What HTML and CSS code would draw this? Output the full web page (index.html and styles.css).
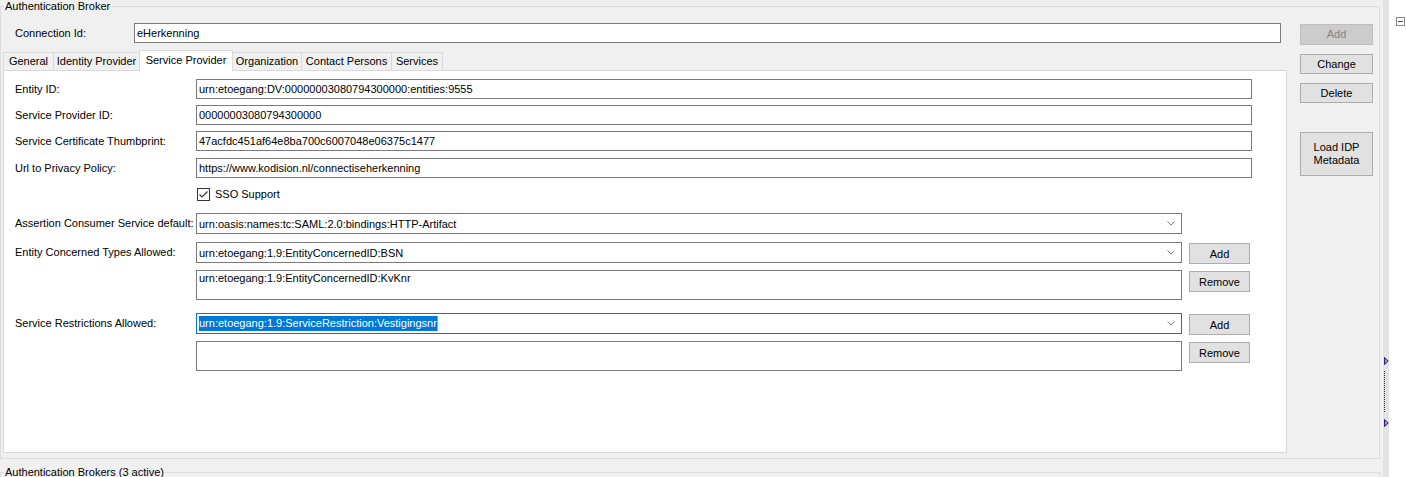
FILE: index.html
```html
<!DOCTYPE html>
<html>
<head>
<meta charset="utf-8">
<link rel="stylesheet" href="styles.css">
</head>
<body>
<div class="app">
  <div class="main">
    <fieldset class="group broker">
      <legend>Authentication Broker</legend>
      <div class="broker-body">
        <div class="editor">
          <div class="conn-row">
            <span class="conn-label">Connection Id:</span>
            <div class="textbox conn-box">eHerkenning</div>
          </div>
          <div class="tabs">
            <div class="tab">General</div>
            <div class="tab">Identity Provider</div>
            <div class="tab selected">Service Provider</div>
            <div class="tab">Organization</div>
            <div class="tab">Contact Persons</div>
            <div class="tab">Services</div>
          </div>
          <div class="tab-page">
            <div class="form">
              <div class="row">
                <span class="lbl">Entity ID:</span>
                <div class="textbox field">urn:etoegang:DV:00000003080794300000:entities:9555</div>
              </div>
              <div class="row mt6">
                <span class="lbl">Service Provider ID:</span>
                <div class="textbox field">00000003080794300000</div>
              </div>
              <div class="row mt6">
                <span class="lbl">Service Certificate Thumbprint:</span>
                <div class="textbox field">47acfdc451af64e8ba700c6007048e06375c1477</div>
              </div>
              <div class="row mt7">
                <span class="lbl">Url to Privacy Policy:</span>
                <div class="textbox field">https://www.kodision.nl/connectiseherkenning</div>
              </div>
              <div class="row check-row mt10">
                <span class="lbl"></span>
                <svg class="checkbox" width="13" height="13" viewBox="0 0 13 13">
                  <rect x="0.5" y="0.5" width="12" height="12" fill="#fff" stroke="#333"/>
                  <path d="M2.5 6.5 L5 9 L10.5 3.5" fill="none" stroke="#333" stroke-width="1.1"/>
                </svg>
                <span class="check-text">SSO Support</span>
              </div>
              <div class="row row-combo mt12">
                <span class="lbl lbl-combo">Assertion Consumer Service default:</span>
                <div class="combo">
                  <span>urn:oasis:names:tc:SAML:2.0:bindings:HTTP-Artifact</span>
                  <svg class="chev" width="8" height="5" viewBox="0 0 8 5"><path d="M0.5 0.5 L4 4 L7.5 0.5" fill="none" stroke="#808080"/></svg>
                </div>
              </div>
              <div class="row row-combo mt8">
                <span class="lbl lbl-combo">Entity Concerned Types Allowed:</span>
                <div class="combo">
                  <span>urn:etoegang:1.9:EntityConcernedID:BSN</span>
                  <svg class="chev" width="8" height="5" viewBox="0 0 8 5"><path d="M0.5 0.5 L4 4 L7.5 0.5" fill="none" stroke="#808080"/></svg>
                </div>
                <div class="btn">Add</div>
              </div>
              <div class="row row-list mt7">
                <span class="lbl"></span>
                <div class="listbox">urn:etoegang:1.9:EntityConcernedID:KvKnr</div>
                <div class="btn">Remove</div>
              </div>
              <div class="row row-combo mt13">
                <span class="lbl lbl-combo">Service Restrictions Allowed:</span>
                <div class="combo focus">
                  <span class="sel">urn:etoegang:1.9:ServiceRestriction:Vestigingsnr</span>
                  <svg class="chev" width="8" height="5" viewBox="0 0 8 5"><path d="M0.5 0.5 L4 4 L7.5 0.5" fill="none" stroke="#808080"/></svg>
                </div>
                <div class="btn">Add</div>
              </div>
              <div class="row row-list mt7">
                <span class="lbl"></span>
                <div class="listbox"></div>
                <div class="btn">Remove</div>
              </div>
            </div>
          </div>
        </div>
        <div class="actions">
          <div class="side-btn disabled">Add</div>
          <div class="side-btn change">Change</div>
          <div class="side-btn delete">Delete</div>
          <div class="side-btn load">Load IDP<br>Metadata</div>
        </div>
      </div>
    </fieldset>
    <fieldset class="group brokers">
      <legend>Authentication Brokers (3 active)</legend>
    </fieldset>
  </div>
  <div class="splitter">
    <svg class="tri" width="5" height="8" viewBox="0 0 5 8"><path d="M0.5 0.5 L4.2 4 L0.5 7.5 Z" fill="#f08c1e" stroke="#1a1aa8"/></svg>
    <div class="dots"></div>
    <svg class="tri tri2" width="5" height="8" viewBox="0 0 5 8"><path d="M0.5 0.5 L4.2 4 L0.5 7.5 Z" fill="#f08c1e" stroke="#1a1aa8"/></svg>
  </div>
  <div class="side">
    <svg class="collapse" width="9" height="9" viewBox="0 0 9 9">
      <rect x="0.5" y="0.5" width="8" height="8" fill="#fff" stroke="#8a8a8a"/>
      <path d="M2 4.5 H7" stroke="#2d4f8f"/>
    </svg>
  </div>
</div>
</body>
</html>
```

FILE: styles.css
```css
* { box-sizing: border-box; }
html, body { margin: 0; padding: 0; }
body {
  width: 1406px;
  height: 477px;
  overflow: hidden;
  background: #f0f0f0;
  font: 11px "Liberation Sans", Arial, sans-serif;
  color: #000;
}
.app { display: flex; height: 477px; }
.main { width: 1383px; flex: none; }

.group {
  margin: 0;
  padding: 0 0 5px 0;
  border: 1px solid #dcdcdc;
  width: 1380px;
  min-width: 0;
}
.group legend {
  margin-left: 3px;
  padding: 0 1px;
  line-height: 13px;
  height: 13px;
}
.brokers { margin-top: 7px; height: 40px; }

.broker-body { display: flex; height: 440px; }
.editor { width: 1287px; padding-left: 2px; flex: none; }

.conn-row { display: flex; margin-top: 10px; height: 20px; align-items: center; }
.conn-label { width: 131px; padding-left: 12px; }
.textbox {
  height: 20px;
  border: 1px solid #7a7a7a;
  background: #fff;
  padding: 0 2px;
  line-height: 18px;
  white-space: nowrap;
  overflow: hidden;
}
.conn-box { width: 1147px; }

.tabs {
  display: flex;
  align-items: flex-end;
  margin-top: 7px;
  height: 20px;
  position: relative;
  z-index: 1;
}
.tab {
  height: 18px;
  border: 1px solid #d9d9d9;
  border-bottom: none;
  margin-right: -1px;
  background: #f0f0f0;
  text-align: center;
  line-height: 16px;
  white-space: nowrap;
}
.tab:nth-child(1) { width: 51px; }
.tab:nth-child(2) { width: 87px; }
.tab:nth-child(3) { width: 94px; }
.tab:nth-child(4) { width: 70px; }
.tab:nth-child(5) { width: 91px; }
.tab:nth-child(6) { width: 52px; }
.tab.selected {
  height: 21px;
  margin-bottom: -1px;
  background: #fff;
  line-height: 18px;
  position: relative;
  z-index: 2;
}
.tab-page {
  width: 1284px;
  height: 383px;
  border: 1px solid #d9d9d9;
  background: #fff;
}

.form { display: flex; flex-direction: column; padding: 8px 0 0 11px; }
.row { display: flex; align-items: flex-start; }
.row-combo { height: 21px; }
.row-list { height: 30px; }
.mt6 { margin-top: 6px; }
.mt7 { margin-top: 7px; }
.mt8 { margin-top: 8px; }
.mt10 { margin-top: 10px; }
.mt12 { margin-top: 12px; }
.mt13 { margin-top: 13px; }
.lbl { width: 181px; flex: none; line-height: 20px; white-space: nowrap; }
.lbl-combo { line-height: 21px; }
.field { width: 1056px; }

.check-row { align-items: center; height: 13px; }
.checkbox { margin-left: 1px; display: block; }
.check-text { margin-left: 5px; line-height: 13px; }

.combo {
  width: 986px;
  height: 21px;
  border: 1px solid #7a7a7a;
  background: #fff;
  display: flex;
  align-items: center;
  justify-content: space-between;
  padding: 0 6px 0 2px;
  white-space: nowrap;
}
.combo.focus { border-color: #0078d7; }
.chev { display: block; }
.sel {
  background: #0078d7;
  color: #fff;
  line-height: 15px;
  border-right: 1px solid #f08c1e;
}
.listbox {
  width: 986px;
  height: 30px;
  border: 1px solid #7a7a7a;
  background: #fff;
  padding: 1px 2px;
  line-height: 13px;
}
.btn {
  width: 61px;
  height: 21px;
  margin: 1px 0 0 7px;
  border: 1px solid #adadad;
  background: #e1e1e1;
  display: flex;
  align-items: center;
  justify-content: center;
}

.actions { display: flex; flex-direction: column; margin-left: 12px; padding-top: 11px; }
.side-btn {
  width: 73px;
  height: 20px;
  border: 1px solid #adadad;
  background: #e1e1e1;
  display: flex;
  align-items: center;
  justify-content: center;
  text-align: center;
  line-height: 13px;
}
.side-btn.disabled { background: #cccccc; border-color: #bfbfbf; color: #838383; height: 21px; }
.side-btn.change { margin-top: 9px; }
.side-btn.delete { margin-top: 9px; }
.side-btn.load { margin-top: 29px; height: 44px; }

.splitter {
  width: 6px;
  flex: none;
  background: #e3e3e3;
  padding: 357px 0 0 1px;
  display: flex;
  flex-direction: column;
}
.tri { display: block; }
.dots {
  width: 1px;
  height: 41px;
  margin: 6px 0 0 0;
  background: repeating-linear-gradient(to bottom, #1a1aa8 0 1px, transparent 1px 2px);
}
.tri2 { margin-top: 7px; }
.side { flex: 1; background: #fff; padding: 17px 0 0 7px; }
.collapse { display: block; }
```
